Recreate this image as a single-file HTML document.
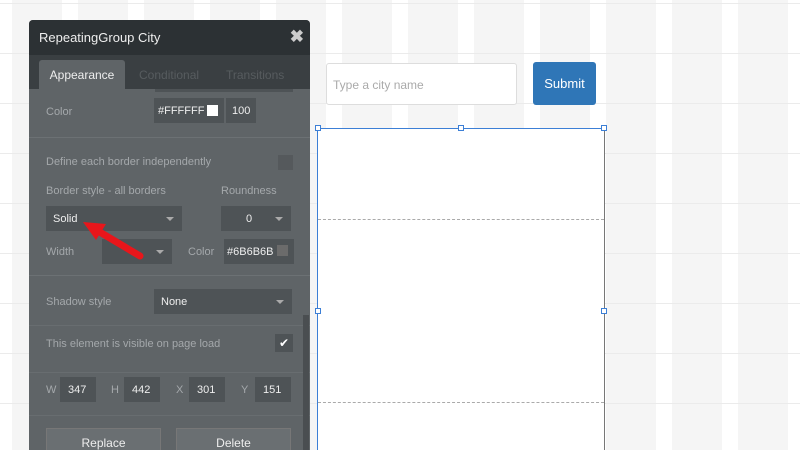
<!DOCTYPE html>
<html style="overflow:hidden;height:450px"><head><style>
*{margin:0;padding:0;box-sizing:border-box}
body{width:800px;height:450px;overflow:hidden;position:relative;font-family:"Liberation Sans",sans-serif;
background-color:#fff;
background-image:linear-gradient(to bottom,#ebebeb 0,#ebebeb 1px,transparent 1px),linear-gradient(to right,#fff 0,#fff 16px,#f5f5f5 16px);
background-size:66px 50px,66px 50px;background-position:0 3px,-4px 0}
.a{position:absolute}
.panel{left:29px;top:20px;width:281px;height:430px;background:#5f6467;border-radius:4px 4px 0 0;overflow:hidden}
.hdr{left:0;top:0;width:281px;height:35px;background:#2c3134;color:#eee;font-size:13px;padding:10px 10px}
.tabs{left:0;top:35px;width:281px;height:34px;background:#3a3f42}
.tab{top:5px;height:29px;font-size:12px;color:#575c5f;padding-top:8px}
.lbl{font-size:11px;color:#a4a8ab}
.box{background:#4e5356;color:#eee;font-size:11px}
.sep{left:0;width:281px;height:1px;background:#6c7174}
.dd::after{content:"";position:absolute;right:8px;top:50%;margin-top:-2px;border:4px solid transparent;border-top:4px solid #aaa}
.btn{background:#6a6f72;color:#eee;font-size:12px;text-align:center;padding-top:7px;border:1px solid #777;border-bottom:none}
</style></head><body>
<div class="a panel">
 <div class="a hdr">RepeatingGroup City<span style="position:absolute;right:6px;top:7px;font-size:17px;color:#ccc;font-weight:bold">✖</span></div>
 <div class="a tabs">
  <div class="a tab" style="left:10px;width:86px;background:#5f6467;color:#eee;text-align:center;border-radius:3px 3px 0 0">Appearance</div>
  <div class="a tab" style="left:110px">Conditional</div>
  <div class="a tab" style="left:197px">Transitions</div>
 </div>
 <div class="a box" style="left:126px;top:69px;width:138px;height:3px"></div>
 <div class="a lbl" style="left:17px;top:86px">Color</div>
 <div class="a box" style="left:125px;top:78px;width:70px;height:25px;padding:7px 4px">#FFFFFF</div>
 <div class="a" style="left:178px;top:85px;width:11px;height:11px;background:#fff"></div>
 <div class="a box" style="left:197px;top:78px;width:30px;height:25px;padding:7px 6px">100</div>
 <div class="a sep" style="top:117px"></div>
 <div class="a lbl" style="left:17px;top:136px">Define each border independently</div>
 <div class="a box" style="left:249px;top:135px;width:15px;height:15px;background:#55595c"></div>
 <div class="a lbl" style="left:17px;top:165px">Border style - all borders</div>
 <div class="a lbl" style="left:192px;top:165px">Roundness</div>
 <div class="a box dd" style="left:17px;top:186px;width:136px;height:25px;padding:7px 7px">Solid</div>
 <div class="a box dd" style="left:192px;top:186px;width:70px;height:25px;padding:7px 25px">0</div>
 <div class="a lbl" style="left:17px;top:226px">Width</div>
 <div class="a box dd" style="left:73px;top:219px;width:70px;height:25px"></div>
 <div class="a lbl" style="left:159px;top:226px">Color</div>
 <div class="a box" style="left:195px;top:219px;width:70px;height:25px;padding:7px 3px">#6B6B6B</div>
 <div class="a" style="left:248px;top:225px;width:11px;height:11px;background:#6b6b6b"></div>
 <div class="a sep" style="top:255px"></div>
 <div class="a lbl" style="left:17px;top:276px">Shadow style</div>
 <div class="a box dd" style="left:125px;top:269px;width:138px;height:25px;padding:7px 7px">None</div>
 <div class="a sep" style="top:305px;background:#686d70"></div>
 <div class="a lbl" style="left:17px;top:318px">This element is visible on page load</div>
 <div class="a box" style="left:246px;top:314px;width:18px;height:18px;color:#fff;text-align:center;font-size:12px;padding-top:2px">✔</div>
 <div class="a sep" style="top:352px;background:#686d70"></div>
 <div class="a lbl" style="left:17px;top:364px">W</div><div class="a box" style="left:31px;top:357px;width:36px;height:25px;padding:7px 8px">347</div>
 <div class="a lbl" style="left:82px;top:364px">H</div><div class="a box" style="left:95px;top:357px;width:36px;height:25px;padding:7px 8px">442</div>
 <div class="a lbl" style="left:147px;top:364px">X</div><div class="a box" style="left:160px;top:357px;width:36px;height:25px;padding:7px 8px">301</div>
 <div class="a lbl" style="left:212px;top:364px">Y</div><div class="a box" style="left:226px;top:357px;width:36px;height:25px;padding:7px 8px">151</div>
 <div class="a sep" style="top:395px;background:#686d70"></div>
 <div class="a btn" style="left:17px;top:408px;width:115px;height:22px">Replace</div>
 <div class="a btn" style="left:147px;top:408px;width:115px;height:22px">Delete</div>
 <div class="a" style="left:274px;top:295px;width:6px;height:135px;background:#4a4e51"></div>
</div>
<div class="a" style="left:326px;top:63px;width:191px;height:42px;background:#fff;border:1px solid #ddd;border-radius:3px;font-size:12px;color:#aaa;padding:14px 6px">Type a city name</div>
<div class="a" style="left:533px;top:62px;width:63px;height:43px;background:#2f76b7;border-radius:3px;color:#fff;font-size:13px;text-align:center;padding-top:14px">Submit</div>
<div class="a" style="left:317px;top:128px;width:288px;height:322px;background:#fff;border:1px solid #3c7fd6;border-right-color:#777;border-bottom:none"></div>
<div class="a" style="left:318px;top:219px;width:286px;border-top:1px dashed #aaa"></div>
<div class="a" style="left:318px;top:402px;width:286px;border-top:1px dashed #aaa"></div>
<div class="a" style="left:317px;top:128px;width:288px;height:1px;background:#3c7fd6"></div>
<div class="a" style="left:315px;top:125px;width:6px;height:6px;border:1px solid #3c7fd6;background:#fff"></div>
<div class="a" style="left:458px;top:125px;width:6px;height:6px;border:1px solid #3c7fd6;background:#fff"></div>
<div class="a" style="left:601px;top:125px;width:6px;height:6px;border:1px solid #3c7fd6;background:#fff"></div>
<div class="a" style="left:315px;top:308px;width:6px;height:6px;border:1px solid #3c7fd6;background:#fff"></div>
<div class="a" style="left:601px;top:308px;width:6px;height:6px;border:1px solid #3c7fd6;background:#fff"></div>
<svg class="a" style="left:0;top:0" width="800" height="450"><path d="M140 256 L98 231" stroke="#e8161b" stroke-width="7" stroke-linecap="round"/><path d="M83 222 L106 224 L96 240 Z" fill="#e8161b"/></svg>
</body></html>
